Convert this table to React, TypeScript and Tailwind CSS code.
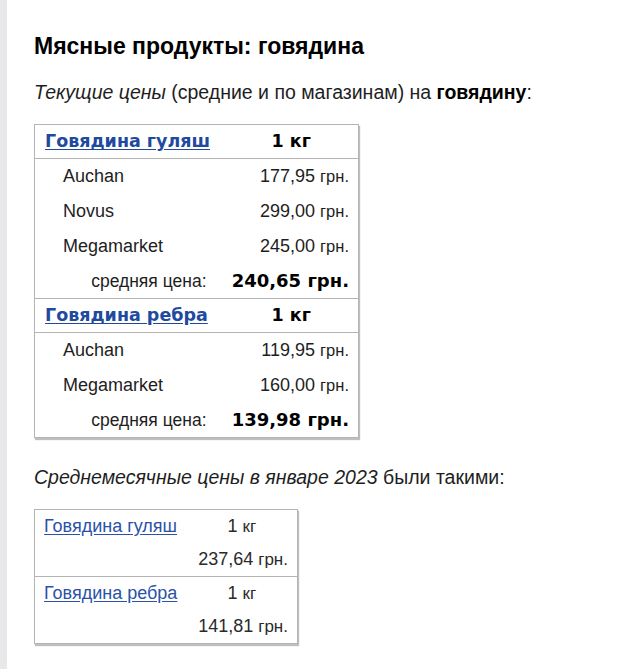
const current = [
  {
    name: "Говядина гуляш",
    stores: [
      { store: "Auchan", num: "177,95" },
      { store: "Novus", num: "299,00" },
      { store: "Megamarket", num: "245,00" },
    ],
    avg: "240,65",
  },
  {
    name: "Говядина ребра",
    stores: [
      { store: "Auchan", num: "119,95" },
      { store: "Megamarket", num: "160,00" },
    ],
    avg: "139,98",
  },
];

const monthly = [
  { name: "Говядина гуляш", num: "237,64" },
  { name: "Говядина ребра", num: "141,81" },
];

export default function App() {
  return (
    <div className="flex min-h-[669px] bg-white text-[#1e1e1e] font-['Liberation_Sans',Arial,sans-serif]">
      <div className="w-[7px] shrink-0 bg-[#e8e8eb]" />
      <div className="pl-[27px] pt-[34px]">
        <h2 className="text-[23px] font-bold leading-[24px] text-black">
          Мясные продукты: говядина
        </h2>
        <p className="mt-[23px] text-[19.5px] leading-[22px]">
          <i>Текущие цены</i> (средние и по магазинам) на <b className="text-black">говядину</b>:
        </p>

        <table className="mt-[21px] w-[325px] border-collapse border border-[#b4b4b4] shadow-[1px_2px_1px_rgba(0,0,0,0.25)]">
          {current.map((item) => (
            <tbody key={item.name} className="border-b border-[#b4b4b4]">
              <tr className="h-[34px] border-b border-[#b4b4b4] font-['DejaVu_Sans',Verdana,sans-serif] font-bold text-[17.5px]">
                <td className="w-[190px] pl-[10px]">
                  <a href="#" className="text-[#1f4a9e] underline underline-offset-2">
                    {item.name}
                  </a>
                </td>
                <td className="text-center text-black">1 кг</td>
              </tr>
              {item.stores.map((s) => (
                <tr key={s.store} className="h-[35px] text-[18px]">
                  <td className="pl-[28px]">{s.store}</td>
                  <td className="pr-[9px] text-right">
                    {s.num} <span className="text-[16.5px]">грн.</span>
                  </td>
                </tr>
              ))}
              <tr className="h-[35px]">
                <td className="pr-[18px] text-right text-[17.5px]">средняя цена:</td>
                <td className="pr-[9px] text-right font-['DejaVu_Sans',Verdana,sans-serif] font-bold text-[18px] text-black">
                  {item.avg} грн.
                </td>
              </tr>
            </tbody>
          ))}
        </table>

        <p className="mt-[28px] text-[19.5px] leading-[22px]">
          <i>Среднемесячные цены в январе 2023</i> были такими:
        </p>

        <table className="mt-[21px] w-[264px] border-collapse border border-[#b4b4b4] text-[18px] text-[#2a2a2a] shadow-[1px_2px_1px_rgba(0,0,0,0.25)]">
          {monthly.map((m) => (
            <tbody key={m.name} className="border-b border-[#b4b4b4]">
              <tr className="h-[33px]">
                <td className="w-[152px] pl-[9px]">
                  <a href="#" className="text-[#2a52a8] underline underline-offset-2">
                    {m.name}
                  </a>
                </td>
                <td className="text-center">
                  1 <span className="text-[17px]">кг</span>
                </td>
              </tr>
              <tr className="h-[34px]">
                <td />
                <td className="pr-[9px] text-right">
                  {m.num} <span className="text-[17px]">грн.</span>
                </td>
              </tr>
            </tbody>
          ))}
        </table>
      </div>
    </div>
  );
}
